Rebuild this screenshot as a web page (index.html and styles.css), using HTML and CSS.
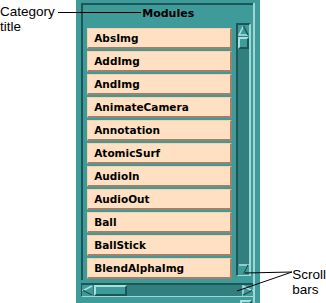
FILE: index.html
```html
<!DOCTYPE html>
<html lang="en">
  <head>
    <meta charset="UTF-8" />
    <title>Modules</title>
    <link rel="stylesheet" href="styles.css">
  </head>
  <body>
    <div class="page">
      <div class="note note-left">Category<br>title</div>

      <div class="panel">
        <div class="inner">
          <div class="frame">
            <div class="title">Modules</div>
            <div class="body">
              <div class="list">
                <div class="module">AbsImg</div>
                <div class="module">AddImg</div>
                <div class="module">AndImg</div>
                <div class="module">AnimateCamera</div>
                <div class="module">Annotation</div>
                <div class="module">AtomicSurf</div>
                <div class="module">AudioIn</div>
                <div class="module">AudioOut</div>
                <div class="module">Ball</div>
                <div class="module">BallStick</div>
                <div class="module">BlendAlphaImg</div>
              </div>
              <div class="vscroll">
                <div class="arrow">
                  <svg width="11" height="11" viewBox="0 0 11 11">
                    <path d="M5.5 1 L1 10 L10 10" fill="none" stroke="#a8e0e0" stroke-width="1.5" />
                    <path d="M5.5 1 L10 10" fill="none" stroke="#1c5656" stroke-width="1.5" />
                  </svg>
                </div>
                <div class="thumb v-thumb"></div>
                <div class="trough"></div>
                <div class="arrow">
                  <svg width="11" height="11" viewBox="0 0 11 11">
                    <path d="M1 1 L10 1 L5.5 10" fill="none" stroke="#a8e0e0" stroke-width="1.5" />
                    <path d="M10 1 L5.5 10" fill="none" stroke="#1c5656" stroke-width="1.5" />
                  </svg>
                </div>
              </div>
            </div>
          </div>

          <div class="hscroll">
            <div class="arrow">
              <svg width="11" height="11" viewBox="0 0 11 11">
                <path d="M10 1 L1 5.5 L10 10" fill="none" stroke="#a8e0e0" stroke-width="1.5" />
                <path d="M1 5.5 L10 10" fill="none" stroke="#1c5656" stroke-width="1.5" />
              </svg>
            </div>
            <div class="thumb h-thumb"></div>
            <div class="trough"></div>
            <div class="arrow">
              <svg width="11" height="11" viewBox="0 0 11 11">
                <path d="M1 1 L10 5.5 L1 10 Z" fill="none" stroke="#a8e0e0" stroke-width="1.5" />
                <path d="M10 5.5 L1 10" fill="none" stroke="#1c5656" stroke-width="1.5" />
              </svg>
            </div>
          </div>
          <div class="stub"></div>
        </div>
      </div>

      <div class="note note-right">Scroll<br>bars</div>

      <!-- callout lines -->
      <svg class="callouts" width="326" height="303" viewBox="0 0 326 303">
        <line x1="58" y1="12.5" x2="141" y2="12.5" stroke="#000" stroke-width="1" />
        <line x1="245" y1="273" x2="292" y2="272" stroke="#000" stroke-width="1" />
        <line x1="237" y1="291" x2="292" y2="272" stroke="#000" stroke-width="1" />
      </svg>
    </div>
  </body>
</html>
```

FILE: styles.css
```css
* {
  margin: 0;
  padding: 0;
  box-sizing: border-box;
}

body {
  background: #fff;
  width: 326px;
  height: 303px;
  overflow: hidden;
}

.page {
  position: relative;
  display: flex;
  width: 326px;
  height: 303px;
}

.note {
  font-family: "Liberation Sans", Arial, sans-serif;
  font-size: 13.5px;
  line-height: 15px;
  color: #000;
}

.note-left {
  width: 77px;
  padding-top: 4px;
}

.note-right {
  padding-top: 267px;
  padding-left: 32px;
}

.panel {
  width: 184px;
  height: 303px;
  background-color: #3f9a9a;
  padding: 3px 5px 0 5px;
}

.inner {
  height: 100%;
  border-right: 2px solid #9fd6d6;
}

.frame {
  height: 277px;
  border-top: 2px solid #1c5656;
  border-left: 2px solid #1c5656;
  overflow: hidden;
}

.title {
  height: 18px;
  text-align: center;
  font-family: "DejaVu Sans", Verdana, sans-serif;
  font-weight: bold;
  font-size: 11px;
  line-height: 14px;
  padding-top: 2px;
  color: #000;
}

.body {
  display: flex;
  gap: 4px;
  padding-left: 4px;
}

.list {
  width: 145px;
  padding-top: 5px;
  display: flex;
  flex-direction: column;
  gap: 2px;
}

.module {
  height: 21px;
  background-color: #ffe0c2;
  border-top: 1px solid #f3d2b0;
  border-left: 1px solid #f3d2b0;
  border-bottom: 2px solid #a08068;
  border-right: 2px solid #a08068;
  padding-left: 6px;
  font-family: "DejaVu Sans", Verdana, sans-serif;
  font-weight: bold;
  font-size: 10.5px;
  line-height: 18px;
  color: #000;
  white-space: nowrap;
}

.vscroll {
  width: 15px;
  height: 253px;
  background-color: #327f7f;
  border-top: 2px solid #1c5656;
  border-left: 2px solid #1c5656;
  border-right: 2px solid #9fd6d6;
  border-bottom: 1px solid #9fd6d6;
  display: flex;
  flex-direction: column;
  align-items: flex-start;
}

.arrow {
  width: 11px;
  height: 11px;
  background-color: #3f9a9a;
  display: flex;
}

.thumb {
  background-color: #3f9a9a;
  border-top: 2px solid #a8e0e0;
  border-left: 2px solid #a8e0e0;
  border-bottom: 2px solid #1c5656;
  border-right: 2px solid #1c5656;
}

.v-thumb {
  width: 11px;
  height: 12px;
  margin-top: 1px;
}

.trough {
  flex: 1;
}

.hscroll {
  margin-top: 3px;
  height: 14px;
  width: 172px;
  background-color: #327f7f;
  border-top: 2px solid #1c5656;
  border-left: 1px solid #1c5656;
  border-bottom: 1px solid #9fd6d6;
  display: flex;
  align-items: flex-start;
}

.h-thumb {
  width: 33px;
  height: 11px;
  margin-left: 1px;
}

.stub {
  margin: 3px 0 0 159px;
  width: 12px;
  height: 6px;
  background-color: #3f9a9a;
  border-top: 2px solid #a8e0e0;
  border-left: 2px solid #a8e0e0;
  border-right: 2px solid #1c5656;
}

.callouts {
  position: absolute;
  left: 0;
  top: 0;
  pointer-events: none;
}
```
